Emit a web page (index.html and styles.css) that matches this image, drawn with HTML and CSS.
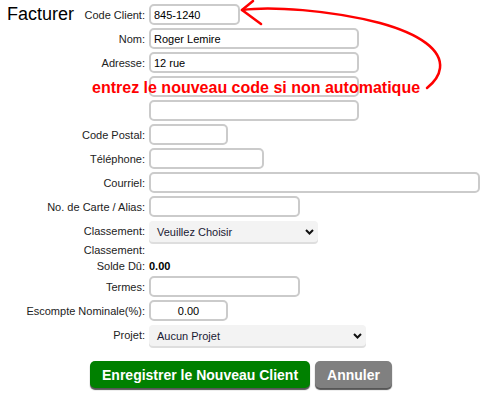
FILE: index.html
```html
<!DOCTYPE html>
<html>
<head>
    <title>Facturer</title>
    <link rel="stylesheet" href="styles.css">
</head>
<body>
    <div class="page">
        <div class="form">
            <div class="label first"><h2 class="title">Facturer</h2><span>Code Client:</span></div>
            <div class="field"><input type="text" class="w-code" value="845-1240"></div>

            <div class="label">Nom:</div>
            <div class="field"><input type="text" class="w-name" value="Roger Lemire"></div>

            <div class="label">Adresse:</div>
            <div class="field"><input type="text" class="w-name" value="12 rue"></div>

            <div class="label"></div>
            <div class="field"><input type="text" class="w-name"></div>

            <div class="label"></div>
            <div class="field"><input type="text" class="w-name"></div>

            <div class="label">Code Postal:</div>
            <div class="field"><input type="text" class="w-postal"></div>

            <div class="label">Téléphone:</div>
            <div class="field"><input type="text" class="w-phone"></div>

            <div class="label">Courriel:</div>
            <div class="field"><input type="text" class="w-mail"></div>

            <div class="label">No. de Carte / Alias:</div>
            <div class="field"><input type="text" class="w-card"></div>

            <div class="label">Classement:</div>
            <div class="field">
                <div class="select w-class">
                    <span>Veuillez Choisir</span>
                    <svg class="chevron" width="9" height="6" viewBox="0 0 9 6"><path d="M1 1 L4.5 4.5 L8 1" fill="none" stroke="#111" stroke-width="2"/></svg>
                </div>
            </div>

            <div class="label text-row">Classement:</div>
            <div class="field text-row"></div>

            <div class="label text-row">Solde Dû:</div>
            <div class="field text-row"><b>0.00</b></div>

            <div class="label">Termes:</div>
            <div class="field"><input type="text" class="w-card"></div>

            <div class="label">Escompte Nominale(%):</div>
            <div class="field"><input type="text" class="w-postal center" value="0.00"></div>

            <div class="label">Projet:</div>
            <div class="field">
                <div class="select w-project">
                    <span>Aucun Projet</span>
                    <svg class="chevron" width="9" height="6" viewBox="0 0 9 6"><path d="M1 1 L4.5 4.5 L8 1" fill="none" stroke="#111" stroke-width="2"/></svg>
                </div>
            </div>
        </div>

        <div class="actions">
            <button class="btn save">Enregistrer le Nouveau Client</button>
            <button class="btn cancel">Annuler</button>
        </div>

        <!-- annotation drawn over the form -->
        <p class="note">entrez le nouveau code si non automatique</p>
        <svg class="arrow" width="482" height="100" viewBox="0 0 482 100">
            <path d="M242 10 C270 6, 330 10, 380 23 C420 34, 442 50, 440 68 C439 77, 432 84, 427 88" fill="none" stroke="#f00" stroke-width="2.5" stroke-linecap="round"/>
            <path d="M253 1 L242 10 L261 24" fill="none" stroke="#f00" stroke-width="2.5" stroke-linecap="round" stroke-linejoin="round"/>
        </svg>
    </div>
</body>
</html>
```

FILE: styles.css
```css
body {
    margin: 0;
    font-family: "Liberation Sans", Arial, sans-serif;
    font-size: 11px;
    color: #222;
    background: #fff;
}
.page {
    position: relative;
    width: 482px;
    height: 403px;
}
.form {
    display: grid;
    grid-template-columns: 145px auto;
    column-gap: 4px;
    row-gap: 3px;
    padding-top: 4px;
}
.label {
    display: flex;
    align-items: center;
    justify-content: flex-end;
    height: 21px;
    white-space: nowrap;
}
.label.first {
    justify-content: space-between;
}
.title {
    margin: 0 0 0 7px;
    font-size: 18px;
    font-weight: normal;
    color: #000;
    line-height: 21px;
}
.field {
    display: flex;
    align-items: center;
    height: 21px;
}
.text-row {
    height: 13px;
    line-height: 13px;
}
.field b {
    color: #000;
}
input {
    box-sizing: border-box;
    height: 21px;
    margin: 0;
    padding: 0 3px;
    border: 2px solid #cbcbcb;
    border-radius: 5px;
    font-family: inherit;
    font-size: 11px;
    color: #000;
    background: #fff;
}
input.center {
    text-align: center;
}
.w-code { width: 91px; }
.w-name { width: 210px; }
.w-postal { width: 79px; }
.w-phone { width: 115px; }
.w-mail { width: 331px; }
.w-card { width: 151px; }
.w-class { width: 169px; }
.w-project { width: 217px; }
.select {
    box-sizing: border-box;
    position: relative;
    display: flex;
    align-items: center;
    height: 21px;
    margin-top: 2px;
    padding-left: 8px;
    background: #f3f3f3;
    border-radius: 4px;
    box-shadow: 0 2px 0 #dedede;
    color: #1a1a33;
}
.chevron {
    position: absolute;
    right: 4px;
    top: 8px;
}
.actions {
    display: flex;
    justify-content: center;
    gap: 5px;
    margin-top: 16px;
}
.btn {
    height: 27px;
    padding: 0 12px;
    border: none;
    border-radius: 5px;
    font-family: "Liberation Sans", Arial, sans-serif;
    font-size: 14px;
    font-weight: bold;
    color: #fff;
    box-shadow: 0 2px 1px #555;
    cursor: pointer;
}
.btn.save {
    background: #008000;
}
.btn.cancel {
    background: #808080;
}
.note {
    position: absolute;
    left: 92px;
    top: 79px;
    margin: 0;
    font-size: 16px;
    font-weight: bold;
    color: #f00;
    white-space: nowrap;
}
.arrow {
    position: absolute;
    left: 0;
    top: 0;
    pointer-events: none;
}
```
